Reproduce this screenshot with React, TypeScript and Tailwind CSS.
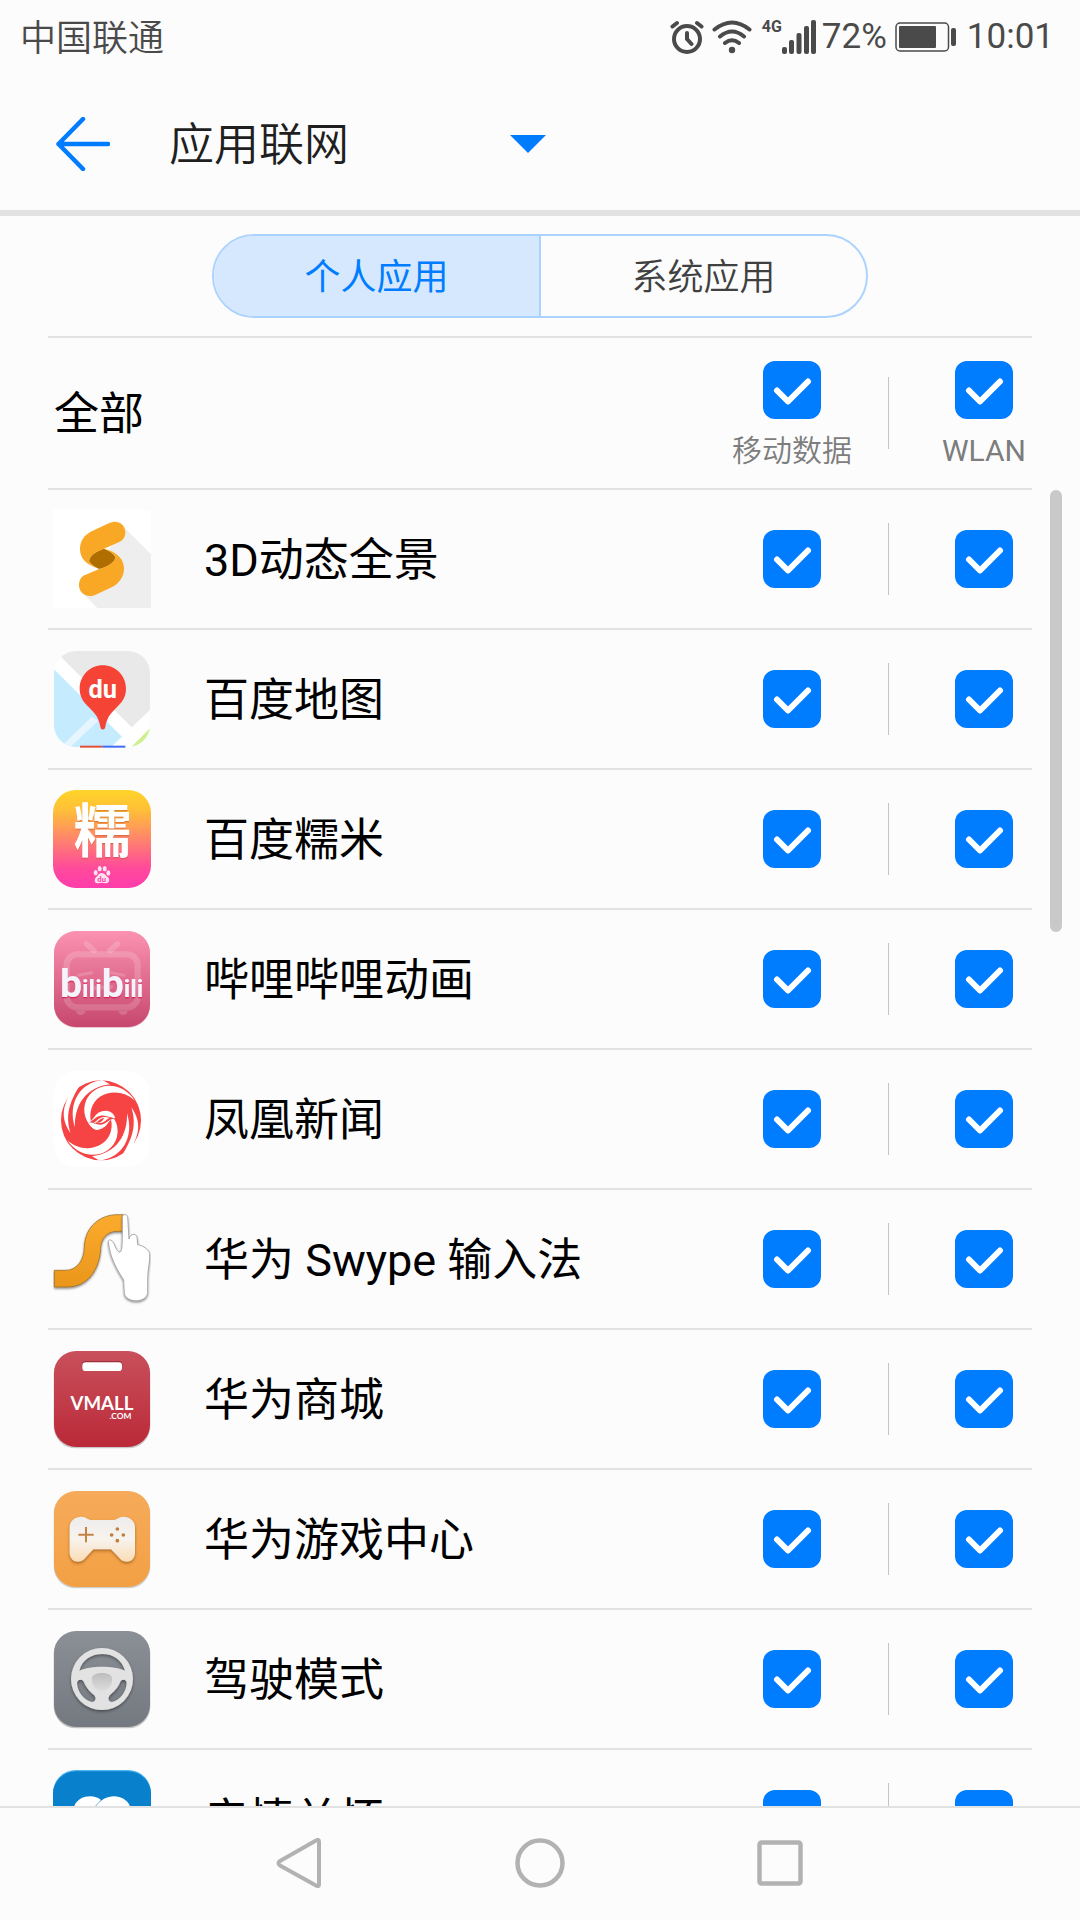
import { useState } from 'react';
import type { ReactNode } from 'react';

interface AppItem {
  id: string;
  name: string;
  icon: ReactNode;
}

interface CheckBoxProps {
  label: string;
  checked: boolean;
  onChange: () => void;
}

function PanoramaIcon() {
  return (
    <svg viewBox="69 90 294 294" className="size-full">
      <path d="M69 90h294v294H69z" fill="#fff" />
      <path d="M278 138 363 223V384H202L160 342 208 262Z" fill="#eee" />
      <path d="M208 267C230 262 256 248 256 230C250 220 238 212 222 206C205 210 177 225 177 244C183 254 195 262 208 267Z" fill="#b06d00" />
      <path d="M177 244C177 225 205 213 222 206L266 187C278 182 286 172 286 157C286 137 270 125 255 125C249 125 244 127 238 129L185 154C163 165 150 183 150 207C150 234 167 254 208 267C195 262 183 254 177 244Z" fill="#f9a826" />
      <path d="M222 206C238 212 250 220 256 230C256 248 230 260 208 267L165 285C152 290 147 303 147 316C147 335 162 348 180 348C186 348 190 347 195 345L245 322C268 310 282 290 282 266C282 238 262 215 222 206Z" fill="#f9a826" />
    </svg>
  );
}

function BaiduMapIcon() {
  return (
    <svg viewBox="69 510 294 294" className="size-full">
      <clipPath id="map-clip">
        <rect x="72" y="513" width="288" height="288" rx="66" />
      </clipPath>
      <g clipPath="url(#map-clip)">
        <path d="M72 513h288v288H72z" fill="#fff" />
        <path d="M75 513 305 742 360 690V513Z" fill="#e9e9e9" />
        <path d="M72 568 276 770 243 801H72Z" fill="#c5ebff" />
        <path d="M185 710 205 722 121 801H92Z" fill="#e6f5fe" />
        <path d="M304 801 360 745V801Z" fill="#cdef90" />
      </g>
      <path d="M150 797h68v6h-68z" fill="#e2513f" />
      <path d="M218 797h68v6h-68z" fill="#3f6bf2" />
      <path d="M218 556C257 556 288 587 288 626C288 655 272 670 256 686C238 704 230 715 225 745Q218 752 212 745C207 715 199 704 181 686C165 670 149 655 149 626C149 587 180 556 218 556Z" fill="#f54336" />
      <text x="218" y="653" textAnchor="middle" fontSize="76" fontWeight="700" fill="#fff">du</text>
    </svg>
  );
}

function NuomiIcon() {
  return (
    <svg viewBox="69 60 294 294" className="size-full">
      <defs>
        <linearGradient id="nuomi-bg" x2="0" y2="1">
          <stop offset="0" stopColor="#ffd42a" />
          <stop offset=".2" stopColor="#ffc037" />
          <stop offset=".55" stopColor="#ff7b74" />
          <stop offset=".8" stopColor="#ff4a9c" />
          <stop offset="1" stopColor="#ff3cab" />
        </linearGradient>
        <filter id="nuomi-shadow">
          <feDropShadow dx="0" dy="4" stdDeviation="2" floodColor="#b5502a" floodOpacity=".5" />
        </filter>
      </defs>
      <rect x="69" y="60" width="294" height="294" rx="68" fill="url(#nuomi-bg)" />
      <text x="217" y="247" textAnchor="middle" fontSize="174" fontWeight="700" fill="#fff" filter="url(#nuomi-shadow)">糯</text>
      <g fill="#ffe3f2">
        <ellipse cx="197" cy="308" rx="6" ry="8" />
        <ellipse cx="209" cy="296" rx="6" ry="8" />
        <ellipse cx="224" cy="296" rx="6" ry="8" />
        <ellipse cx="235" cy="309" rx="6" ry="8" />
        <path d="M215 309C225 309 228 318 234 322C242 330 236 341 227 340Q215 337 204 340C194 341 191 330 198 322C204 318 206 309 215 309Z" />
      </g>
      <text x="215" y="335" textAnchor="middle" fontSize="23" fontWeight="700" fill="#ff45a4">du</text>
    </svg>
  );
}

function BilibiliIcon() {
  return (
    <svg viewBox="69 480 294 294" className="size-full">
      <defs>
        <linearGradient id="bili-bg" x2="0" y2="1">
          <stop offset="0" stopColor="#fb92b1" />
          <stop offset="1" stopColor="#c7476e" />
        </linearGradient>
        <filter id="bili-shadow">
          <feDropShadow dx="0" dy="4" stdDeviation="1" floodColor="#d4194f" floodOpacity=".8" />
        </filter>
      </defs>
      <rect x="72" y="484" width="288" height="289" rx="66" fill="#b9506f" opacity=".4" />
      <rect x="72" y="483" width="288" height="288" rx="66" fill="url(#bili-bg)" />
      <g fill="none" stroke="#fff" strokeOpacity=".17" strokeLinecap="round">
        <rect x="110" y="553" width="213" height="159" rx="32" strokeWidth="19" />
        <path d="M170 522 192 542M262 522 240 542" strokeWidth="17" />
        <path d="M145 616 185 608M245 608 282 616M190 650Q204 665 217 650Q230 665 245 650" strokeWidth="9" />
      </g>
      <path d="M138 722H166Q164 735 152 735T138 722ZM265 722H293Q291 735 280 735T265 722Z" fill="#fff" opacity=".17" />
      <text x="215" y="681" textAnchor="middle" fontWeight="700" fill="#f5f3fb" filter="url(#bili-shadow)">
        <tspan fontSize="118">b</tspan>
        <tspan fontSize="74">ili</tspan>
        <tspan fontSize="118">b</tspan>
        <tspan fontSize="74">ili</tspan>
      </text>
    </svg>
  );
}

function PhoenixIcon() {
  // one half of the swirl, drawn twice with a half turn
  const half = (
    <>
      <path d="M314 152C290 112 235 92 192 122C155 148 150 208 197 240C182 222 177 200 184 176C200 122 275 112 314 152Z" />
      <path d="M217 90C150 98 112 160 135 232C133 168 165 112 240 103Z" />
      <path d="M114 142C94 185 98 215 122 250C108 205 112 165 150 106L120 100Z" />
    </>
  );
  return (
    <svg viewBox="69 60 294 294" className="size-full">
      <rect x="72" y="63" width="288" height="288" rx="66" fill="#fff" />
      <circle cx="213" cy="211" r="120" fill="#f64344" />
      <g fill="#fff">
        {half}
        <g transform="rotate(180 213 211)">{half}</g>
        <path d="M174 217C195 212 190 184 228 182C243 183 252 192 256 204C232 205 238 236 199 240C186 236 181 228 174 217Z" />
      </g>
      <path d="M175 217C192 212 196 199 212 197C224 196 234 201 255 205C236 207 232 221 214 224C200 225 190 217 175 217Z" fill="#f64344" />
      <path d="M190 219C203 214 205 201 224 201L240 203C228 207 226 218 210 219Z" fill="#fff" />
      <path d="M196 218C207 214 208 205 223 204C219 209 216 216 206 218Z" fill="#f64344" />
    </svg>
  );
}

function SwypeIcon() {
  return (
    <svg viewBox="69 480 294 294" className="size-full">
      <defs>
        <linearGradient id="swype-band" gradientUnits="userSpaceOnUse" x1="0" y1="495" x2="0" y2="712">
          <stop offset="0" stopColor="#fbab2c" />
          <stop offset="1" stopColor="#ea961c" />
        </linearGradient>
        <filter id="swype-shadow" x="-20%" y="-20%" width="140%" height="140%">
          <feDropShadow dx="0" dy="4" stdDeviation="3" floodColor="#000" floodOpacity=".5" />
        </filter>
      </defs>
      <g filter="url(#swype-shadow)">
        <path d="M73 661H105C145 661 163 625 163 590C166 525 215 494 262 494H279V544H262C230 544 212 566 212 598C208 660 172 711 112 711H73Z" fill="url(#swype-band)" stroke="#8d6325" strokeWidth="2" />
      </g>
      <g filter="url(#swype-shadow)">
        <path d="M277 502C277 491 292 491 293 502L297 567C301 549 320 550 321 562L323 584C340 587 355 598 359 610C361 636 352 660 353 690V728C350 760 288 760 283 730L281 690C262 660 239 622 235 574C238 565 248 572 254 585C258 596 262 605 270 607C278 600 276 580 277 560Z" fill="#fff" stroke="#8c8c8c" strokeWidth="2" />
      </g>
    </svg>
  );
}

function VmallIcon() {
  return (
    <svg viewBox="69 60 294 294" className="size-full overflow-visible">
      <defs>
        <linearGradient id="vmall-bg" x2="0" y2="1">
          <stop offset="0" stopColor="#c9505c" />
          <stop offset="1" stopColor="#bb2938" />
        </linearGradient>
      </defs>
      <rect x="71" y="66" width="290" height="289" rx="66" fill="#000" opacity=".2" />
      <rect x="72" y="63" width="288" height="288" rx="66" fill="url(#vmall-bg)" />
      <rect x="156" y="93" width="121" height="28" rx="11" fill="#9d2f3d" />
      <rect x="157" y="97" width="119" height="26" rx="10" fill="#fff" />
      <g fontFamily="Lato, sans-serif" fontWeight="700" fill="#fff">
        <text x="216" y="241" textAnchor="middle" fontSize="56">VMALL</text>
        <text x="304" y="268" textAnchor="end" fontSize="25">.COM</text>
      </g>
    </svg>
  );
}

function GameCenterIcon() {
  return (
    <svg viewBox="69 480 294 294" className="size-full overflow-visible">
      <defs>
        <linearGradient id="game-bg" x2="0" y2="1">
          <stop offset="0" stopColor="#f6ab5a" />
          <stop offset="1" stopColor="#f3a044" />
        </linearGradient>
        <linearGradient id="game-pad" x2="0" y2="1">
          <stop offset="0" stopColor="#ededed" />
          <stop offset=".5" stopColor="#f7f3ee" />
          <stop offset="1" stopColor="#fadcb6" />
        </linearGradient>
        <filter id="game-shadow" x="-20%" y="-20%" width="140%" height="150%">
          <feDropShadow dx="0" dy="5" stdDeviation="4" floodColor="#7d4306" floodOpacity=".6" />
        </filter>
      </defs>
      <rect x="71" y="486" width="290" height="289" rx="66" fill="#000" opacity=".18" />
      <rect x="72" y="483" width="288" height="288" rx="66" fill="url(#game-bg)" />
      <path d="M119 592C119 572 136 560 155 560C168 560 174 570 184 570H250C260 570 266 560 280 560C299 560 315 573 315 592V668C315 692 292 702 274 690L243 658H190L160 690C142 702 119 692 119 668Z" fill="url(#game-pad)" filter="url(#game-shadow)" />
      <path d="M145 614H191M168 591V637" stroke="#c48340" strokeWidth="6" />
      <g fill="#c07d38">
        <circle cx="262" cy="597" r="5.5" />
        <circle cx="245" cy="615" r="5.5" />
        <circle cx="280" cy="615" r="5.5" />
        <circle cx="262" cy="632" r="5.5" />
      </g>
    </svg>
  );
}

function DrivingIcon() {
  return (
    <svg viewBox="69 60 294 294" className="size-full overflow-visible">
      <defs>
        <linearGradient id="drive-bg" x2="0" y2="1">
          <stop offset="0" stopColor="#8b9096" />
          <stop offset="1" stopColor="#747981" />
        </linearGradient>
        <linearGradient id="drive-hub" x2="0" y2="1">
          <stop offset="0" stopColor="#bdbdbd" />
          <stop offset="1" stopColor="#dcdcdc" />
        </linearGradient>
        <filter id="drive-shadow" x="-20%" y="-20%" width="140%" height="150%">
          <feDropShadow dx="0" dy="5" stdDeviation="4" floodColor="#000" floodOpacity=".4" />
        </filter>
      </defs>
      <rect x="71" y="66" width="290" height="289" rx="66" fill="#000" opacity=".22" />
      <rect x="72" y="63" width="288" height="288" rx="66" fill="url(#drive-bg)" />
      <path
        d="M216 114A93 93 0 1 1 216 300A93 93 0 1 1 216 114ZM148 182C165 174 190 170 217 170C243 170 268 174 285 182C276 150 250 132 217 132C184 132 156 150 148 182ZM141 220C143 247 161 270 186 276C197 276 200 264 192 255C176 242 167 230 160 213C153 206 141 208 141 220ZM290 220C290 208 279 206 272 213C266 230 256 242 240 255C232 264 235 276 246 276C271 270 288 247 290 220Z"
        fill="#e2e2e2"
        fillRule="evenodd"
        filter="url(#drive-shadow)"
      />
      <path d="M186 203C189 184 243 184 246 203C249 224 235 242 216 242S183 224 186 203Z" fill="url(#drive-hub)" />
    </svg>
  );
}

function CareIcon() {
  return (
    <svg viewBox="69 480 294 294" className="size-full">
      <rect x="69" y="480" width="294" height="294" rx="68" fill="#4db4ee" />
      <rect x="69" y="484" width="294" height="290" rx="68" fill="#0880cb" />
      <path d="M130 600C133 572 158 559 180 559C193 559 205 563 213 570L190 594C170 640 200 680 216 700C170 680 130 640 130 600Z" fill="#fff" />
      <path d="M198 588C212 570 230 559 252 559C278 559 302 576 304 605C304 650 250 690 216 706C190 680 185 620 198 588Z" fill="#fff" />
    </svg>
  );
}

const apps: AppItem[] = [
  { id: 'panorama', name: '3D动态全景', icon: <PanoramaIcon /> },
  { id: 'baidu-map', name: '百度地图', icon: <BaiduMapIcon /> },
  { id: 'nuomi', name: '百度糯米', icon: <NuomiIcon /> },
  { id: 'bilibili', name: '哔哩哔哩动画', icon: <BilibiliIcon /> },
  { id: 'phoenix', name: '凤凰新闻', icon: <PhoenixIcon /> },
  { id: 'swype', name: '华为 Swype 输入法', icon: <SwypeIcon /> },
  { id: 'vmall', name: '华为商城', icon: <VmallIcon /> },
  { id: 'game', name: '华为游戏中心', icon: <GameCenterIcon /> },
  { id: 'driving', name: '驾驶模式', icon: <DrivingIcon /> },
  { id: 'care', name: '亲情关怀', icon: <CareIcon /> },
];

function CheckBox({ label, checked, onChange }: CheckBoxProps) {
  return (
    <span className="grid size-[58px] place-items-center">
      <input
        type="checkbox"
        aria-label={label}
        checked={checked}
        onChange={onChange}
        className="peer col-start-1 row-start-1 size-full appearance-none rounded-xl border-2 border-[#b0b0b0] checked:border-0 checked:bg-[#007dff]"
      />
      <svg
        viewBox="0 0 58 58"
        className="pointer-events-none invisible col-start-1 row-start-1 size-full peer-checked:visible"
        fill="none"
        stroke="#fff"
        strokeWidth="6"
        strokeLinecap="round"
        strokeLinejoin="round"
      >
        <path d="M14 29.500 25 40.500 45 20.500" />
      </svg>
    </span>
  );
}

function StatusBar() {
  return (
    <div className="flex h-[74px] items-center justify-between pr-[26px] pl-5 text-[#4a4a4a]">
      <span className="pt-1 text-[36px] font-[350]">中国联通</span>
      <div className="flex items-center">
        <svg viewBox="0 0 34 34" className="mr-2 size-[34px]" fill="none" stroke="currentColor" strokeWidth="4" strokeLinecap="round">
          <circle cx="17" cy="19" r="13" />
          <path d="M17 13V19L21.500 24M2.500 6.500 7 3M31.500 6.500 27 3" />
        </svg>
        <svg viewBox="0 0 40 34" className="mr-2.5 h-[34px] w-10" fill="none" stroke="currentColor" strokeWidth="4" strokeLinecap="round">
          <path d="M2.500 9.500Q20-4.500 37.500 9.500M8 16.500Q20 6.500 32 16.500M13 23Q20 17.500 27 23" />
          <circle cx="20" cy="30" r="3.200" fill="currentColor" stroke="none" />
        </svg>
        <span className="mb-5 text-[16px] leading-4 font-bold">4G</span>
        <svg viewBox="0 0 34 34" className="mr-1.5 size-[34px]" fill="currentColor">
          <rect y="27" width="5" height="7" rx="2" />
          <rect x="7" y="20" width="5" height="14" rx="2" />
          <rect x="14.500" y="13" width="5" height="21" rx="2" />
          <rect x="22" y="6" width="5" height="28" rx="2" />
          <rect x="29" y="0" width="5" height="34" rx="2" />
        </svg>
        <span className="text-[35px] leading-9">72%</span>
        <svg viewBox="0 0 62 30" className="mr-2.5 ml-2 h-[30px] w-[62px]">
          <rect x="1" y="1" width="52.500" height="28" rx="4" fill="none" stroke="#4a4a4a" strokeWidth="1.500" />
          <rect x="4" y="4" width="37" height="22" rx="1" fill="#4a4a4a" />
          <rect x="56" y="6" width="5" height="18" rx="2" fill="#4a4a4a" />
        </svg>
        <span className="text-[35px] leading-9">10:01</span>
      </div>
    </div>
  );
}

export default function App() {
  const [tab, setTab] = useState('personal');
  const [mobile, setMobile] = useState<string[]>(apps.map((a) => a.id));
  const [wlan, setWlan] = useState<string[]>(apps.map((a) => a.id));

  const toggle = (list: string[], id: string) =>
    list.includes(id) ? list.filter((x) => x !== id) : [...list, id];

  const toggleAll = (list: string[]) => (list.length === apps.length ? [] : apps.map((a) => a.id));

  const tabClass = (active: boolean) =>
    active
      ? 'flex-1 bg-[#d6e8fd] pt-1 text-[#007dff]'
      : 'flex-1 pt-1 font-[350] text-[#404040]';

  return (
    <div className="flex h-screen flex-col overflow-hidden bg-[#fcfcfc] font-['Roboto','Noto_Sans_CJK_SC',sans-serif] text-black">
      <StatusBar />

      {/* Title bar */}
      <header className="flex h-[142px] shrink-0 items-center border-b-[6px] border-[#e2e2e2] pt-1 pl-14">
        <button type="button" aria-label="返回" className="mr-[59px]">
          <svg viewBox="0 0 54 54" className="size-[54px]" fill="none" stroke="#007dff" strokeWidth="4.500" strokeLinecap="round" strokeLinejoin="round">
            <path d="M27 2 2.500 27 27 52M2.500 27H52" />
          </svg>
        </button>
        <div className="grid w-[377px] items-center">
          <select aria-label="页面" className="col-start-1 row-start-1 w-full appearance-none pt-1 text-[45px] font-[350] text-[#1f1f1f]">
            <option>应用联网</option>
          </select>
          <svg viewBox="0 0 36 18" className="pointer-events-none col-start-1 row-start-1 h-[18px] w-9 justify-self-end">
            <path d="M0 0H36L18 18Z" fill="#007dff" />
          </svg>
        </div>
      </header>

      {/* Personal / system switch */}
      <div className="flex h-[120px] shrink-0 items-center justify-center">
        <div className="flex h-[84px] w-[656px] divide-x-2 divide-[#acd3ff] overflow-hidden rounded-full border-2 border-[#acd3ff] text-[36px]">
          <button type="button" className={tabClass(tab === 'personal')} onClick={() => setTab('personal')}>
            个人应用
          </button>
          <button type="button" className={tabClass(tab === 'system')} onClick={() => setTab('system')}>
            系统应用
          </button>
        </div>
      </div>

      {/* Column heads */}
      <div className="mx-12 flex shrink-0 items-center border-y-2 border-[#e2e2e2]">
        <span className="flex-1 pt-1 pl-1.5 text-[45px]">全部</span>
        <div className="flex h-[150px] w-48 flex-col items-center justify-center gap-3 pt-1.5 text-[30px] leading-10 font-[350] text-[#7d7d7d]">
          <CheckBox label="移动数据" checked={mobile.length === apps.length} onChange={() => setMobile(toggleAll)} />
          <span>移动数据</span>
        </div>
        <div className="mr-[47px] h-[72px] w-px bg-[#c4c4c4]" />
        <div className="flex h-[150px] w-24 flex-col items-center justify-center gap-3 pt-1.5 text-[30px] leading-10 text-[#7d7d7d]">
          <CheckBox label="WLAN" checked={wlan.length === apps.length} onChange={() => setWlan(toggleAll)} />
          <span>WLAN</span>
        </div>
      </div>

      {/* App list */}
      <main className="relative min-h-0 flex-1 overflow-hidden">
        <ul className="px-12">
          {apps.map((app) => (
            <li key={app.id} className="flex h-[140px] items-center border-b-2 border-[#e2e2e2] pl-[5px]">
              <div className="size-[98px] shrink-0">{app.icon}</div>
              <span className="flex-1 pt-1 pl-[53px] text-[45px]">{app.name}</span>
              <div className="flex w-48 justify-center">
                <CheckBox
                  label={`${app.name} 移动数据`}
                  checked={mobile.includes(app.id)}
                  onChange={() => setMobile(toggle(mobile, app.id))}
                />
              </div>
              <div className="mr-[47px] h-[72px] w-px bg-[#c4c4c4]" />
              <div className="flex w-24 justify-center">
                <CheckBox
                  label={`${app.name} WLAN`}
                  checked={wlan.includes(app.id)}
                  onChange={() => setWlan(toggle(wlan, app.id))}
                />
              </div>
            </li>
          ))}
        </ul>
        <div className="absolute top-0 right-[18px] h-[442px] w-3 rounded-full bg-[#c9c9c9]" />
      </main>

      {/* Navigation keys */}
      <nav className="flex h-[114px] shrink-0 items-center justify-center gap-[190px] border-t-2 border-[#e2e2e2] pb-0.5">
        <button type="button" aria-label="后退">
          <svg viewBox="0 0 50 50" className="size-[50px]" fill="none" stroke="#b2b2b2" strokeWidth="4" strokeLinejoin="round">
            <path d="M44 3.500Q44 1 41 2.500L5 23Q2 25 5 27.500L41 47.500Q44 49 44 46.500Z" />
          </svg>
        </button>
        <button type="button" aria-label="主屏幕">
          <svg viewBox="0 0 50 50" className="size-[50px]" fill="none" stroke="#b2b2b2" strokeWidth="4.500">
            <circle cx="25" cy="25" r="22.500" />
          </svg>
        </button>
        <button type="button" aria-label="最近任务">
          <svg viewBox="0 0 50 50" className="size-[50px]" fill="none" stroke="#b2b2b2" strokeWidth="4.500">
            <rect x="4.500" y="4.500" width="41" height="41" rx="2" />
          </svg>
        </button>
      </nav>
    </div>
  );
}
